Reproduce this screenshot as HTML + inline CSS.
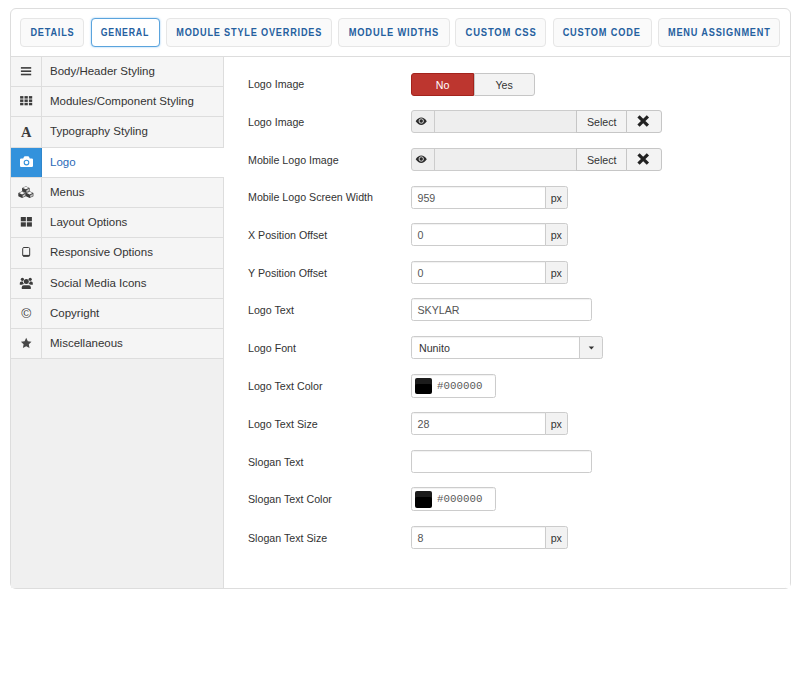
<!DOCTYPE html>
<html><head><meta charset="utf-8"><title>Template Options</title>
<style>
*{box-sizing:border-box;margin:0;padding:0}
html,body{width:800px;height:674px;background:#fff;overflow:hidden}
body{font-family:"Liberation Sans",sans-serif;font-size:10.66px;color:#333;position:relative}
#panel{position:absolute;left:10px;top:8px;width:781px;height:581px;border:1px solid #ddd;border-radius:6px;background:#fff}
#tabs{position:absolute;left:0;top:0;width:100%;height:48px;border-bottom:1px solid #ddd}
.tab{position:absolute;top:9px;height:29.3px;border:1px solid #e6e6e6;border-radius:4px;background:#fafafa;color:#25609f;text-align:center;white-space:nowrap;overflow:hidden}
.tab span{display:inline-block;font-weight:bold;font-size:10px;letter-spacing:.9px;line-height:28.6px;transform-origin:50% 50%;margin:0 -20px;padding-left:.3px}
.tab.on{background:#fff;border-color:#5ba4dd;box-shadow:0 0 2px rgba(82,168,236,.7)}
#side{position:absolute;left:0;top:48px;width:213px;bottom:0;background:#f0f0f0;border-right:1px solid #ddd}
.it{position:absolute;left:0;width:212px;height:30.24px;background:#f5f5f5;border-bottom:1px solid #ddd;font-size:11.5px;line-height:29.4px;color:#333;padding-left:39px;white-space:nowrap}
.it .ic{position:absolute;left:0;top:0;width:31px;height:100%;border-right:1px solid #ddd}
.it.on{background:#fff;color:#2a69b8;width:213px}
.it.on .ic{background:#3392dc;border-right-color:#2f86cb}
.ic svg{position:absolute;left:0;top:-1px;width:30px;height:30px;overflow:visible}
.lab{position:absolute;left:248px;height:23px;line-height:23px;font-size:10.66px;color:#333;white-space:nowrap}
.c{position:absolute;border:1px solid #ccc;background:#fff;font-size:10.66px;color:#555;white-space:nowrap;line-height:22px}
.inp{border-radius:2.5px;padding-left:5.5px;box-shadow:inset 0 1px 1px rgba(0,0,0,.06)}
.inpl{border-radius:2.5px 0 0 2.5px;padding-left:5.5px;box-shadow:inset 0 1px 1px rgba(0,0,0,.06)}
.addr{border-radius:0 2.5px 2.5px 0;background:#f2f2f2;text-align:center;color:#333}
.addl{border-radius:3px 0 0 3px;background:#eee;text-align:center;color:#333}
.dis{background:#eee;border-radius:0}
.btn{background:#f3f3f3;border-color:#c6c6c6;color:#333;text-align:center;border-radius:0}
</style></head><body>
<div id="panel">
<div id="tabs">
<div class="tab" style="left:9px;width:64.2px"><span style="transform:scaleX(0.913)">DETAILS</span></div>
<div class="tab on" style="left:79.6px;width:69.2px"><span style="transform:scaleX(0.878)">GENERAL</span></div>
<div class="tab" style="left:154.65px;width:166.55px"><span style="transform:scaleX(0.913)">MODULE STYLE OVERRIDES</span></div>
<div class="tab" style="left:327.25px;width:111.35px"><span style="transform:scaleX(0.93)">MODULE WIDTHS</span></div>
<div class="tab" style="left:444.35px;width:91.15px"><span style="transform:scaleX(0.942)">CUSTOM CSS</span></div>
<div class="tab" style="left:541.5px;width:99px"><span style="transform:scaleX(0.921)">CUSTOM CODE</span></div>
<div class="tab" style="left:646.5px;width:122.85px"><span style="transform:scaleX(0.917)">MENU ASSIGNMENT</span></div>
</div>
<div id="side">
<div class="it" style="top:0px"><span class="ic"><svg viewBox="0 0 30 30"><g fill="#3c3c3c"><rect x="9.900" y="11.100" width="10.300" height="1.600"/><rect x="9.900" y="14.400" width="10.300" height="1.600"/><rect x="9.900" y="17.700" width="10.300" height="1.600"/></g></svg></span>Body/Header Styling</div>
<div class="it" style="top:30.24px"><span class="ic"><svg viewBox="0 0 30 30"><g fill="#3c3c3c"><rect x="9.1" y="10.1" width="3.300" height="2.500"/><rect x="9.1" y="13.45" width="3.300" height="2.500"/><rect x="9.1" y="16.8" width="3.300" height="2.500"/><rect x="13.5" y="10.1" width="3.300" height="2.500"/><rect x="13.5" y="13.45" width="3.300" height="2.500"/><rect x="13.5" y="16.8" width="3.300" height="2.500"/><rect x="17.9" y="10.1" width="3.300" height="2.500"/><rect x="17.9" y="13.45" width="3.300" height="2.500"/><rect x="17.9" y="16.8" width="3.300" height="2.500"/></g></svg></span>Modules/Component Styling</div>
<div class="it" style="top:60.48px"><span class="ic"><svg viewBox="0 0 30 30"><text x="15.300" y="20.600" text-anchor="middle" font-family="Liberation Serif,serif" font-weight="bold" font-size="14.500" fill="#3c3c3c">A</text></svg></span>Typography Styling</div>
<div class="it on" style="top:90.72px"><span class="ic"><svg viewBox="0 0 30 30"><path fill="#fff" d="M9 12.600q0-1.200 1.200-1.200h2l.7-1.500q.3-.6 1-.6h3.200q.7 0 1 .6l.7 1.500h2q1.200 0 1.200 1.200v6.300q0 1.100-1.200 1.100h-10.600q-1.200 0-1.200-1.100z"/><circle cx="15.500" cy="15.600" r="2.300" fill="none" stroke="#3392dc" stroke-width="1.100"/></svg></span>Logo</div>
<div class="it" style="top:120.96px"><span class="ic"><svg viewBox="0 0 30 30"><polygon fill="#3c3c3c" points="14.85,9.2 18.6,10.95 18.6,14.25 14.85,16 11.1,14.25 11.1,10.95"/><polygon fill="#f5f5f5" points="14.85,9.54 17.79,10.95 14.85,12.36 11.91,10.95"/><polygon fill="#f5f5f5" fill-opacity=".75" points="15.45,13.15 17.95,11.8 17.95,13.9 15.45,15.2"/><polygon fill="#3c3c3c" points="11.05,14.3 14.8,16.05 14.8,19.35 11.05,21.1 7.3,19.35 7.3,16.05"/><polygon fill="#f5f5f5" points="11.05,14.64 13.99,16.05 11.05,17.46 8.11,16.05"/><polygon fill="#f5f5f5" fill-opacity=".75" points="11.65,18.25 14.15,16.9 14.15,19 11.65,20.3"/><polygon fill="#3c3c3c" points="18.65,14.3 22.4,16.05 22.4,19.35 18.65,21.1 14.9,19.35 14.9,16.05"/><polygon fill="#f5f5f5" points="18.65,14.64 21.59,16.05 18.65,17.46 15.71,16.05"/><polygon fill="#f5f5f5" fill-opacity=".75" points="19.25,18.25 21.75,16.9 21.75,19 19.25,20.3"/></svg></span>Menus</div>
<div class="it" style="top:151.2px"><span class="ic"><svg viewBox="0 0 30 30"><g fill="#3c3c3c"><rect x="9.800" y="10" width="5.050" height="4.300"/><rect x="15.850" y="10" width="5.050" height="4.300"/><rect x="9.800" y="15.300" width="5.050" height="4.300"/><rect x="15.850" y="15.300" width="5.050" height="4.300"/></g></svg></span>Layout Options</div>
<div class="it" style="top:181.44px"><span class="ic"><svg viewBox="0 0 30 30"><rect x="11.700" y="10.500" width="7" height="8.800" rx="1.200" fill="none" stroke="#3c3c3c" stroke-width="1"/><rect x="12" y="17.900" width="6.400" height="1.500" fill="#3c3c3c"/></svg></span>Responsive Options</div>
<div class="it" style="top:211.68px"><span class="ic"><svg viewBox="0 0 30 30"><g fill="#3c3c3c"><circle cx="15.300" cy="13.600" r="2.500"/><path d="M10.800 21.100v-1.900q0-2 2-2h5q2 0 2 2v1.900z"/><circle cx="11.400" cy="11.300" r="1.600"/><circle cx="19.200" cy="11.300" r="1.600"/><path d="M8.800 16.700v-1.600q0-1.600 1.600-1.600h1.400q.2 1.600 1.300 2.500-1.400.1-2.100.7z"/><path d="M21.800 16.700v-1.600q0-1.600-1.600-1.600h-1.400q-.2 1.600-1.300 2.500 1.400.1 2.100.7z"/></g></svg></span>Social Media Icons</div>
<div class="it" style="top:241.92px"><span class="ic"><svg viewBox="0 0 30 30"><text x="15.200" y="20.100" text-anchor="middle" font-family="Liberation Sans,sans-serif" font-size="13.600" fill="#3c3c3c">©</text></svg></span>Copyright</div>
<div class="it" style="top:272.16px"><span class="ic"><svg viewBox="0 0 30 30"><path fill="#484848" d="M15.200 9.800l1.600 3.400 3.700.5-2.700 2.600.7 3.700-3.300-1.800-3.300 1.800.7-3.700-2.700-2.600 3.700-.5z"/></svg></span>Miscellaneous</div>
</div>
<div style="position:absolute;right:0;bottom:0;width:4px;height:4px;background:#fff"></div>
</div>
<div class="lab" style="top:73.45px">Logo Image</div>
<div class="lab" style="top:111.05px">Logo Image</div>
<div class="lab" style="top:148.7px">Mobile Logo Image</div>
<div class="lab" style="top:186.3px">Mobile Logo Screen Width</div>
<div class="lab" style="top:223.8px">X Position Offset</div>
<div class="lab" style="top:261.5px">Y Position Offset</div>
<div class="lab" style="top:299.15px">Logo Text</div>
<div class="lab" style="top:336.75px">Logo Font</div>
<div class="lab" style="top:375.25px">Logo Text Color</div>
<div class="lab" style="top:412.95px">Logo Text Size</div>
<div class="lab" style="top:450.65px">Slogan Text</div>
<div class="lab" style="top:488.45px">Slogan Text Color</div>
<div class="lab" style="top:526.55px">Slogan Text Size</div>
<div class="c btn" style="left:411px;width:63px;top:72.7px;height:22.9px;background:#bd362f;border-color:#a3231c;color:#fff;border-radius:3px 0 0 3px">No</div>
<div class="c btn" style="left:473.6px;width:61.2px;top:72.7px;height:22.9px;border-radius:0 3px 3px 0">Yes</div>
<div class="c addl" style="left:411px;width:23.6px;top:110.25px;height:23px;"><svg viewBox="0 0 24 22" style="position:absolute;left:0;top:0;width:24px;height:22px"><path fill="#2b2b2b" d="M3.700 10.250q2.450-3.700 5.550-3.700t5.550 3.700q-2.450 3.700-5.550 3.700t-5.550-3.700z"/><circle cx="9.250" cy="10" r="2.200" fill="none" stroke="#eee" stroke-opacity=".85" stroke-width="1"/></svg></div>
<div class="c dis" style="left:433.6px;width:143.7px;top:110.25px;height:23px;"></div>
<div class="c btn" style="left:576.3px;width:50.9px;top:110.25px;height:23px;line-height:22.8px">Select</div>
<div class="c btn" style="left:626.2px;width:36.1px;top:110.25px;height:23px;border-radius:0 3px 3px 0"><svg viewBox="0 0 34 22" style="position:absolute;left:0;top:0;width:34px;height:22px"><path stroke="#222" stroke-width="3.200" d="M11.500 5.300l9.400 9.400M20.900 5.300l-9.400 9.400"/></svg></div>
<div class="c addl" style="left:411px;width:23.6px;top:147.9px;height:23px;"><svg viewBox="0 0 24 22" style="position:absolute;left:0;top:0;width:24px;height:22px"><path fill="#2b2b2b" d="M3.700 10.250q2.450-3.700 5.550-3.700t5.550 3.700q-2.450 3.700-5.550 3.700t-5.550-3.700z"/><circle cx="9.250" cy="10" r="2.200" fill="none" stroke="#eee" stroke-opacity=".85" stroke-width="1"/></svg></div>
<div class="c dis" style="left:433.6px;width:143.7px;top:147.9px;height:23px;"></div>
<div class="c btn" style="left:576.3px;width:50.9px;top:147.9px;height:23px;line-height:22.8px">Select</div>
<div class="c btn" style="left:626.2px;width:36.1px;top:147.9px;height:23px;border-radius:0 3px 3px 0"><svg viewBox="0 0 34 22" style="position:absolute;left:0;top:0;width:34px;height:22px"><path stroke="#222" stroke-width="3.200" d="M11.500 5.300l9.400 9.400M20.900 5.300l-9.400 9.400"/></svg></div>
<div class="c inpl" style="left:411px;width:135px;top:185.5px;height:23px;">959</div>
<div class="c addr" style="left:545px;width:22.6px;top:185.5px;height:23px;">px</div>
<div class="c inpl" style="left:411px;width:135px;top:223px;height:23px;">0</div>
<div class="c addr" style="left:545px;width:22.6px;top:223px;height:23px;">px</div>
<div class="c inpl" style="left:411px;width:135px;top:260.7px;height:23px;">0</div>
<div class="c addr" style="left:545px;width:22.6px;top:260.7px;height:23px;">px</div>
<div class="c inpl" style="left:411px;width:135px;top:412.15px;height:23px;">28</div>
<div class="c addr" style="left:545px;width:22.6px;top:412.15px;height:23px;">px</div>
<div class="c inpl" style="left:411px;width:135px;top:525.75px;height:23px;">8</div>
<div class="c addr" style="left:545px;width:22.6px;top:525.75px;height:23px;">px</div>
<div class="c inp" style="left:411px;width:180.5px;top:298.35px;height:23px;">SKYLAR</div>
<div class="c inp" style="left:411px;width:180.5px;top:449.85px;height:23px;"></div>
<div class="c inpl" style="left:411px;width:169px;top:335.95px;height:23px;color:#333;padding-left:7px">Nunito</div>
<div class="c addr" style="left:579.3px;width:23.9px;top:335.95px;height:23px;"><svg viewBox="0 0 24 22" style="position:absolute;left:0;top:0;width:24px;height:22px"><path fill="#333" d="M8.700 9.400h5.400l-2.700 3.200z"/></svg></div>
<div class="c inp" style="left:411px;width:84.8px;top:374.15px;height:23.6px;"><span style="position:absolute;left:3px;top:2.600px;width:16.600px;height:16.600px;background:#000;border-radius:2px;box-shadow:inset 0 6px 0 rgba(255,255,255,.11)"></span><span style="position:absolute;left:25px;top:0;font-family:'Liberation Mono',monospace;font-size:10.800px;line-height:22px;color:#5a5a5a">#000000</span></div>
<div class="c inp" style="left:411px;width:84.8px;top:487.35px;height:23.6px;"><span style="position:absolute;left:3px;top:2.600px;width:16.600px;height:16.600px;background:#000;border-radius:2px;box-shadow:inset 0 6px 0 rgba(255,255,255,.11)"></span><span style="position:absolute;left:25px;top:0;font-family:'Liberation Mono',monospace;font-size:10.800px;line-height:22px;color:#5a5a5a">#000000</span></div>
</body></html>
